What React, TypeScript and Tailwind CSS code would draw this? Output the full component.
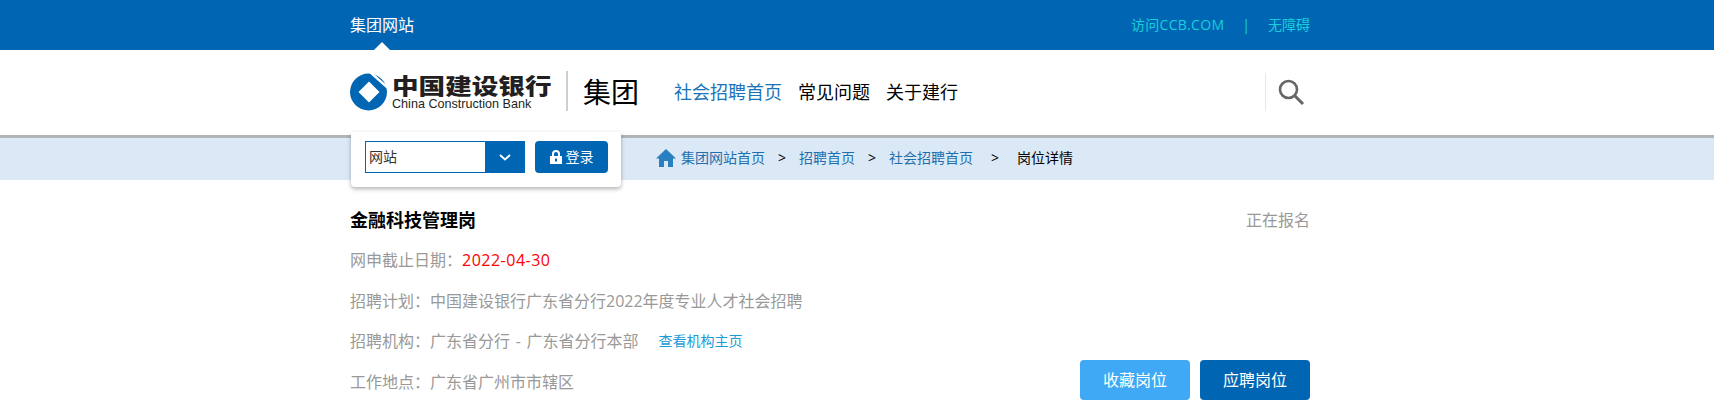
const F = '"Open Sans","Noto Sans CJK SC",sans-serif';

function Logo() {
  return (
    <div className="flex items-center">
      <svg width="37" height="38" viewBox="0 0 37 38" className="shrink-0">
        <circle cx="18.5" cy="19" r="18.5" fill="#0066b3" />
        <path fill="#fff" d="M19 8.5 L29.5 19 L19 29.5 L8.5 19 Z" />
        <path stroke="#fff" strokeWidth="2.5" d="M20 -1 L38 15" />
      </svg>
      <div className="ml-[5px] flex flex-col w-[160px]">
        <span className="text-[26.6px] leading-[24px] h-[24px] font-black text-[#231f20] whitespace-nowrap scale-y-[0.8]" style={{ fontFamily: '"Noto Sans CJK SC",sans-serif' }}>中国建设银行</span>
        <span className="text-[12.6px] leading-[14px] text-[#231f20] whitespace-nowrap" style={{ fontFamily: '"Liberation Sans",sans-serif' }}>China Construction Bank</span>
      </div>
    </div>
  );
}

export default function App() {
  return (
    <div className="relative w-full h-[420px] bg-white overflow-hidden" style={{ fontFamily: F }}>
      <div className="h-[50px] bg-[#0066b3]">
        <div className="relative w-[960px] h-full ml-[350px] flex items-center justify-between">
          <span className="text-base text-white">集团网站</span>
          <div className="flex items-center text-sm text-[#17cfdc]">
            <span className="tracking-[0.3px]">访问CCB.COM</span>
            <span className="mx-[18px]">|</span>
            <span>无障碍</span>
          </div>
          <div className="absolute left-[24px] bottom-0 w-0 h-0 border-x-[8px] border-x-transparent border-b-[8px] border-b-white" />
        </div>
      </div>

      <div className="h-[85px] bg-white">
        <div className="w-[960px] h-full ml-[350px] flex items-center pb-[1px]">
          <div className="mb-[1px]"><Logo /></div>
          <div className="ml-[14px] w-[2px] h-[40px] bg-[#cfcfcf] -mt-[3px]" />
          <span className="ml-[15px] text-[28px] leading-none text-black">集团</span>
          <nav className="ml-[35px] flex gap-4 text-lg text-black">
            <span className="text-[#1a73bb]">社会招聘首页</span>
            <span>常见问题</span>
            <span>关于建行</span>
          </nav>
          <div className="ml-auto mr-[5px] h-[38px] w-[40px] border-l border-[#e8e8e8] flex items-center justify-end">
            <svg width="27" height="27" viewBox="0 0 27 27" fill="none" stroke="#666" strokeWidth="2.6">
              <circle cx="10.5" cy="10.5" r="8.5" />
              <path d="M16.5 16.5 L25 25" strokeWidth="3" />
            </svg>
          </div>
        </div>
      </div>

      <div className="h-[45px] bg-[#dbe9f6] border-t-[3px] border-[#b0b5ba]">
        <div className="w-[960px] h-full ml-[350px] flex items-center pl-[306px] pb-[3px] text-sm">
          <svg width="20" height="18" viewBox="0 0 20 18" className="shrink-0">
            <path fill="#2a7fc1" d="M10 0 L20 9.5 L17 9.5 L17 18 L12 18 L12 12 L8 12 L8 18 L3 18 L3 9.5 L0 9.5 Z" />
          </svg>
          <span className="ml-[5px] text-[#1f6fae]">集团网站首页</span>
          <span className="ml-[13px] text-black">&gt;</span>
          <span className="ml-[13px] text-[#1f6fae]">招聘首页</span>
          <span className="ml-[13px] text-black">&gt;</span>
          <span className="ml-[13px] text-[#1f6fae]">社会招聘首页</span>
          <span className="ml-[18px] text-black">&gt;</span>
          <span className="ml-[18px] text-black">岗位详情</span>
        </div>
      </div>

      <div className="w-[960px] ml-[350px] relative">
        <div className="pt-[27px] flex items-center justify-between">
          <span className="text-lg leading-[26px] font-bold text-black">金融科技管理岗</span>
          <span className="text-base leading-[26px] text-[#999]">正在报名</span>
        </div>
        <div className="mt-[15px] flex flex-col gap-[16.5px] text-base leading-[24px] text-[#999]">
          <div>网申截止日期：<span className="text-[#f00] tracking-[0.5px]">2022-04-30</span></div>
          <div>招聘计划：中国建设银行广东省分行2022年度专业人才社会招聘</div>
          <div className="flex items-center">
            <span>招聘机构：广东省分行<span className="mx-[1.5px]"> - </span>广东省分行本部</span>
            <span className="ml-5 text-sm text-[#1a9ad6]">查看机构主页</span>
          </div>
          <div>工作地点：广东省广州市市辖区</div>
        </div>
        <div className="absolute right-0 top-[180px] flex gap-[10px] text-base text-white">
          <button className="w-[110px] h-[40px] rounded bg-[#3fa9f5]">收藏岗位</button>
          <button className="w-[110px] h-[40px] rounded bg-[#0066b3]">应聘岗位</button>
        </div>
      </div>

      <div className="absolute left-[351px] top-[132px] w-[270px] h-[55px] bg-white rounded-b shadow-[0_2px_4px_rgba(0,0,0,0.3)] flex items-start pl-[14px] pt-[9px]">
        <div className="w-[160px] h-[32px] border border-[#0066b3] flex">
          <span className="flex-1 text-sm leading-[30px] pl-[3px] text-[#333]">网站</span>
          <div className="w-[39px] bg-[#0066b3] flex items-center justify-center">
            <svg width="12" height="7" viewBox="0 0 12 7" fill="none" stroke="#fff" strokeWidth="1.8"><path d="M1 1 L6 5.5 L11 1" /></svg>
          </div>
        </div>
        <button className="ml-[10px] w-[73px] h-[32px] rounded bg-[#0066b3] text-sm text-white flex items-center justify-center gap-[4px]">
          <svg width="12" height="14" viewBox="0 0 12 14"><path fill="#fff" fillRule="evenodd" d="M2 6 V4 A4 4 0 0 1 10 4 V6 H12 V14 H0 V6 Z M4 6 H8 V4 A2 2 0 0 0 4 4 Z M5 8.5 V11.5 H7 V8.5 Z" /></svg>
          登录
        </button>
      </div>
    </div>
  );
}
